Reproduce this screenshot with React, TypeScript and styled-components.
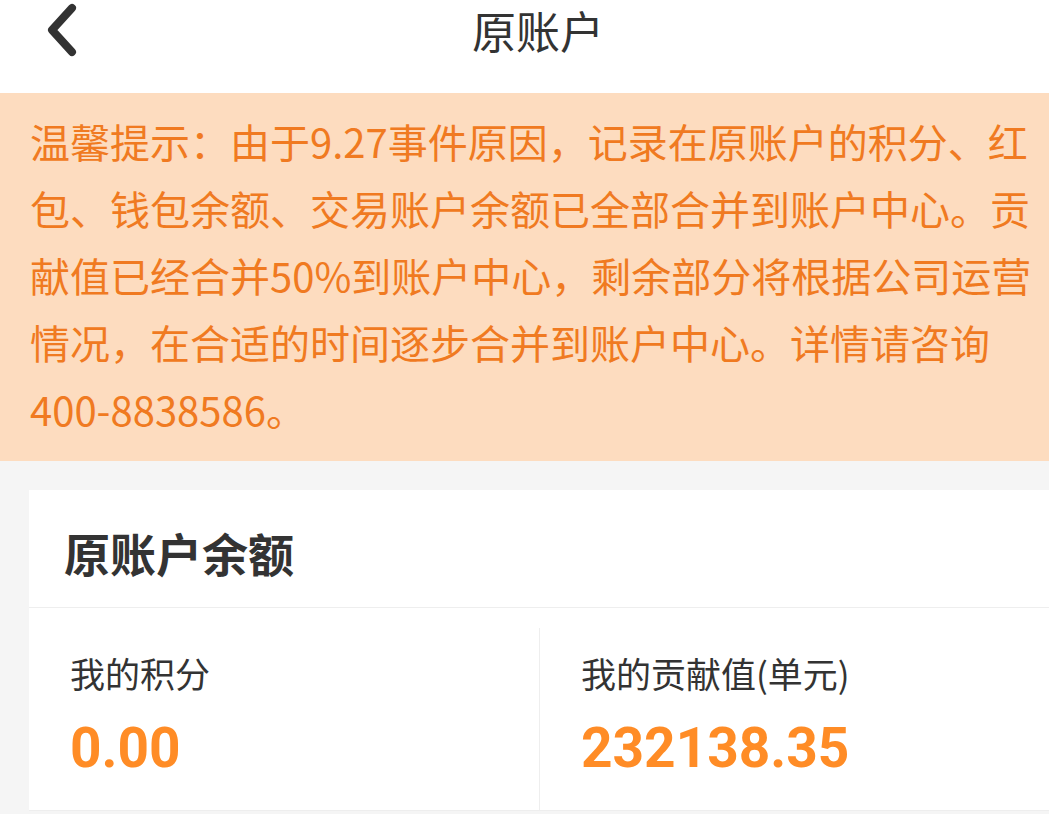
import React from "react";
import styled, { createGlobalStyle } from "styled-components";

const GlobalStyle = createGlobalStyle`
  html, body {
    margin: 0;
    padding: 0;
    background: #f5f5f5;
    font-family: "Noto Sans CJK SC", "Noto Sans", sans-serif;
  }
  #root {
    min-height: 814px;
  }
`;

const Page = styled.div`
  display: flex;
  flex-direction: column;
  width: 100%;
  min-height: 814px;
  background: #f5f5f5;
`;

const Header = styled.header`
  height: 93px;
  background: #ffffff;
  display: flex;
  align-items: flex-start;
`;

const BackButton = styled.button`
  width: 104px;
  height: 60px;
  padding: 0 0 0 44px;
  border: none;
  background: transparent;
  display: flex;
  align-items: center;
  cursor: pointer;
`;

const Title = styled.h1`
  flex: 1;
  margin: 0;
  height: 60px;
  line-height: 60px;
  text-align: center;
  font-size: 44px;
  font-weight: 400;
  color: #333333;
`;

const RightSpacer = styled.div`
  width: 77px;
`;

const Notice = styled.div`
  background: #fddcbf;
  color: #f07a21;
  font-size: 40px;
  line-height: 67px;
  padding: 15px 10px 18px 30px;
  white-space: nowrap;
`;

const Card = styled.section`
  margin: 29px 0 0 29px;
  background: #ffffff;
`;

const CardTitle = styled.h2`
  box-sizing: border-box;
  height: 118px;
  margin: 0;
  padding: 39px 0 0 35px;
  font-size: 46px;
  line-height: 46px;
  font-weight: 700;
  color: #333333;
  border-bottom: 1px solid #eeeeee;
`;

const StatsRow = styled.div`
  display: grid;
  grid-template-columns: 510px 1fr;
  padding-top: 20px;
  border-bottom: 1px solid #eeeeee;
`;

const StatCell = styled.div<{ $divider?: boolean }>`
  box-sizing: border-box;
  height: 182px;
  padding: 24px 0 0 41px;
  border-left: ${(p) => (p.$divider ? "1px solid #eeeeee" : "none")};
  display: flex;
  flex-direction: column;
`;

const StatLabel = styled.div`
  font-size: 35px;
  line-height: 42px;
  color: #333333;
`;

const StatValue = styled.div`
  margin-top: 27px;
  font-family: Roboto, "Noto Sans", sans-serif;
  font-size: 55px;
  line-height: 55px;
  font-weight: 700;
  color: #ff8c26;
`;

const BackIcon = () => (
  <svg width="36" height="56" viewBox="0 0 36 56" fill="none">
    <path
      d="M28 6 L8 28 L28 50"
      stroke="#333333"
      strokeWidth="8"
      strokeLinecap="round"
      strokeLinejoin="round"
    />
  </svg>
);

const noticeLines = [
  "温馨提示：由于9.27事件原因，记录在原账户的积分、红",
  "包、钱包余额、交易账户余额已全部合并到账户中心。贡",
  "献值已经合并50%到账户中心，剩余部分将根据公司运营",
  "情况，在合适的时间逐步合并到账户中心。详情请咨询",
  "400-8838586。",
];

const stats = [
  { label: "我的积分", value: "0.00" },
  { label: "我的贡献值(单元)", value: "232138.35" },
];

export default function App() {
  return (
    <Page>
      <GlobalStyle />
      <Header>
        <BackButton aria-label="返回">
          <BackIcon />
        </BackButton>
        <Title>原账户</Title>
        <RightSpacer />
      </Header>
      <Notice>
        {noticeLines.map((line, i) => (
          <React.Fragment key={i}>
            {line}
            {i < noticeLines.length - 1 && <br />}
          </React.Fragment>
        ))}
      </Notice>
      <Card>
        <CardTitle>原账户余额</CardTitle>
        <StatsRow>
          {stats.map((s, i) => (
            <StatCell key={s.label} $divider={i > 0}>
              <StatLabel>{s.label}</StatLabel>
              <StatValue>{s.value}</StatValue>
            </StatCell>
          ))}
        </StatsRow>
      </Card>
    </Page>
  );
}
